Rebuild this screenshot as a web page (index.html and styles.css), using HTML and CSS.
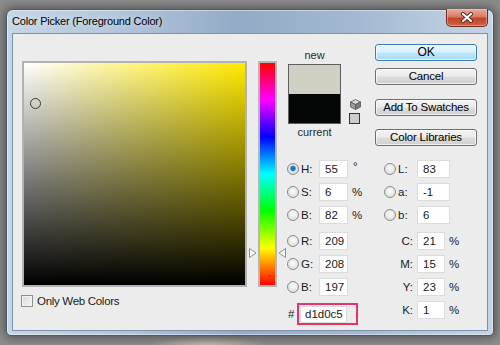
FILE: index.html
```html
<!DOCTYPE html>
<html lang="en">
<head>
    <meta charset="UTF-8">
    <title>Color Picker (Foreground Color)</title>
    <link rel="stylesheet" href="styles.css">
</head>
<body>
    <div class="desk">
        <div class="window">
            <div class="titlebar">
                <span class="title">Color Picker (Foreground Color)</span>
                <button class="close">
                    <svg width="14" height="11" viewBox="0 0 14 11">
                        <path d="M3 2 L11 9 M11 2 L3 9" stroke="#5a2a22" stroke-width="4" stroke-linecap="round"/>
                        <path d="M3 2 L11 9 M11 2 L3 9" stroke="#fff" stroke-width="2.2" stroke-linecap="round"/>
                    </svg>
                </button>
            </div>
            <div class="client">
                <!-- saturation / brightness field -->
                <div class="picker-col">
                    <div class="field">
                        <span class="ring"></span>
                    </div>
                    <label class="webcolors"><span class="check"></span>Only Web Colors</label>
                </div>

                <!-- hue slider -->
                <div class="hue">
                    <svg class="arrow arrow-l" width="8" height="10" viewBox="0 0 8 10">
                        <polygon points="0.5,0.5 7,5 0.5,9.5" fill="#fff" stroke="#8e8e8e"/>
                    </svg>
                    <svg class="arrow arrow-r" width="8" height="10" viewBox="0 0 8 10">
                        <polygon points="7.5,0.5 1,5 7.5,9.5" fill="#fff" stroke="#8e8e8e"/>
                    </svg>
                </div>

                <div class="side">
                    <div class="side-top">
                        <div class="preview">
                            <div class="cap">new</div>
                            <div class="swatch">
                                <div class="sw-new"></div>
                                <div class="sw-cur"></div>
                            </div>
                            <div class="cap">current</div>
                        </div>
                        <div class="alerts">
                            <svg class="cube" width="11" height="11" viewBox="0 0 11 11">
                                <polygon points="5.5,0.5 10.5,3 5.5,5.5 0.5,3" fill="#dcdcdc" stroke="#555" stroke-width="0.8"/>
                                <polygon points="0.5,3 5.5,5.5 5.5,10.5 0.5,8" fill="#9c9c9c" stroke="#555" stroke-width="0.8"/>
                                <polygon points="10.5,3 5.5,5.5 5.5,10.5 10.5,8" fill="#7c7c7c" stroke="#555" stroke-width="0.8"/>
                            </svg>
                            <span class="websafe"></span>
                        </div>
                        <div class="buttons">
                            <button class="btn btn-ok">OK</button>
                            <button class="btn btn-cancel">Cancel</button>
                            <button class="btn btn-add">Add To Swatches</button>
                            <button class="btn btn-lib">Color Libraries</button>
                        </div>
                    </div>

                    <div class="values">
                        <div class="col col-a">
                            <div class="row"><span class="radio on"></span><span class="lbl">H:</span><span class="num">55</span><span class="unit deg">°</span></div>
                            <div class="row"><span class="radio"></span><span class="lbl">S:</span><span class="num">6</span><span class="unit">%</span></div>
                            <div class="row"><span class="radio"></span><span class="lbl">B:</span><span class="num">82</span><span class="unit">%</span></div>
                            <div class="row sep"><span class="radio"></span><span class="lbl">R:</span><span class="num">209</span></div>
                            <div class="row"><span class="radio"></span><span class="lbl">G:</span><span class="num">208</span></div>
                            <div class="row"><span class="radio"></span><span class="lbl">B:</span><span class="num">197</span></div>
                            <div class="hexrow">
                                <span class="hash">#</span>
                                <span class="hexbox"><span class="num hex">d1d0c5</span></span>
                            </div>
                        </div>
                        <div class="col col-b">
                            <div class="row"><span class="radio"></span><span class="lbl">L:</span><span class="num">83</span></div>
                            <div class="row"><span class="radio"></span><span class="lbl">a:</span><span class="num">-1</span></div>
                            <div class="row"><span class="radio"></span><span class="lbl">b:</span><span class="num">6</span></div>
                            <div class="row sep cmyk"><span class="lbl">C:</span><span class="num">21</span><span class="unit">%</span></div>
                            <div class="row cmyk"><span class="lbl">M:</span><span class="num">15</span><span class="unit">%</span></div>
                            <div class="row cmyk"><span class="lbl">Y:</span><span class="num">23</span><span class="unit">%</span></div>
                            <div class="row cmyk"><span class="lbl">K:</span><span class="num">1</span><span class="unit">%</span></div>
                        </div>
                    </div>
                </div>
            </div>
        </div>
    </div>
</body>
</html>
```

FILE: styles.css
```css
body, html {
    margin: 0;
    padding: 0;
    width: 100%;
    height: 100%;
    overflow: hidden;
}

body {
    background-color: #8c8c8c;
    background-image: radial-gradient(ellipse 60px 12px at 208px 348px, rgba(214, 203, 182, 0.95), rgba(214, 203, 182, 0));
    font-family: "Liberation Sans", Arial, sans-serif;
    font-size: 11px;
    color: #1b1b1b;
}

.desk {
    padding: 9px 0 0 6px;
}

.window {
    width: 488px;
    height: 327px;
    box-sizing: border-box;
    display: flex;
    flex-direction: column;
    padding: 0 5px 4px;
    border: 1px solid #4a5a6c;
    border-radius: 7px 7px 5px 5px;
    background: linear-gradient(to right, #c6d6e7 0%, #b3c6db 22%, #93abc6 48%, #a3b9d1 72%, #c4d5e7 100%);
    box-shadow: 0 0 10px 2px rgba(0, 0, 0, 0.4), inset 0 0 0 1px rgba(255, 255, 255, 0.45);
}

/* title bar */
.titlebar {
    height: 23px;
    display: flex;
    align-items: flex-start;
}

.title {
    padding-top: 4px;
    line-height: 14px;
    font-size: 11px;
    letter-spacing: -0.2px;
    color: #000;
    text-shadow: 0 0 6px rgba(255, 255, 255, 0.7);
}

.close {
    margin-left: auto;
    margin-top: -1px;
    width: 42px;
    height: 18px;
    padding: 0;
    display: flex;
    align-items: center;
    justify-content: center;
    border: 1px solid #6e2b20;
    border-top: none;
    border-radius: 0 0 5px 5px;
    background: linear-gradient(#e8ab9c 0%, #d97b66 45%, #c5432b 55%, #cf6146 100%);
    box-shadow: inset 0 0 0 1px rgba(255, 210, 200, 0.45);
}

/* client area */
.client {
    flex: 1;
    display: flex;
    align-items: flex-start;
    border: 1px solid #7d92a8;
    background-color: #ececec;
}

.picker-col {
    margin: 27px 0 0 9px;
    width: 225px;
}

.field {
    position: relative;
    height: 226px;
    box-sizing: border-box;
    border: 2px solid #b2b2b2;
    background:
        linear-gradient(to top, #000, rgba(0, 0, 0, 0)),
        linear-gradient(to right, #fff, #ffea00);
}

.ring {
    position: absolute;
    left: 6px;
    top: 35px;
    width: 9px;
    height: 9px;
    border: 1.5px solid #3a3a3a;
    border-radius: 50%;
}

.webcolors {
    display: flex;
    align-items: center;
    margin: 8px 0 0 -1px;
    font-size: 11.5px;
    letter-spacing: -0.3px;
}

.check {
    width: 12px;
    height: 12px;
    box-sizing: border-box;
    margin-right: 4px;
    border: 1px solid #8e8f8f;
    background: linear-gradient(135deg, #d8d8d8, #f7f7f7);
    box-shadow: inset 0 0 0 1px #f4f4f4;
}

.hue {
    position: relative;
    margin: 27px 0 0 11px;
    width: 19px;
    height: 226px;
    box-sizing: border-box;
    border: 2px solid #b6b6b6;
    background: linear-gradient(#ff0000 0%, #ff00ff 16.6%, #0000ff 33.3%, #00ffff 50%, #00ff00 66.6%, #ffff00 83.3%, #ff0000 100%);
}

.arrow {
    position: absolute;
    top: 185px;
}

.arrow-l {
    left: -11px;
}

.arrow-r {
    left: 18px;
}

.side {
    margin-left: 10px;
    padding-top: 10px;
}

.side-top {
    display: flex;
    align-items: flex-start;
}

.preview {
    margin: 4px 0 0 1px;
    width: 53px;
}

.cap {
    line-height: 14px;
    text-align: center;
    color: #2a2a2a;
}

.swatch {
    margin: 2px 0 1px;
    border: 1px solid #5e5e5e;
}

.sw-new {
    height: 29px;
    background-color: #d1d0c5;
}

.sw-cur {
    height: 29px;
    background-color: #040606;
}

.alerts {
    margin: 55px 0 0 8px;
    width: 11px;
    display: flex;
    flex-direction: column;
    gap: 3px;
}

.cube {
    display: block;
    margin-left: 1px;
}

.websafe {
    width: 11px;
    height: 11px;
    box-sizing: border-box;
    border: 1px solid #333;
    background-color: #cccccc;
}

.buttons {
    margin-left: 15px;
    width: 102px;
    display: flex;
    flex-direction: column;
}

.btn {
    height: 17px;
    padding: 0;
    box-sizing: border-box;
    border: 1px solid #707070;
    border-radius: 3px;
    background: linear-gradient(#f4f4f4 0%, #ebebeb 48%, #dddddd 52%, #cfcfcf 100%);
    box-shadow: inset 0 0 0 1px rgba(255, 255, 255, 0.7);
    font-family: "Liberation Sans", Arial, sans-serif;
    font-size: 11.5px;
    letter-spacing: -0.2px;
    line-height: 15px;
    color: #000;
}

.btn-ok {
    border-color: #3c7fb1;
    background: linear-gradient(#ecf7fd 0%, #d9f0fc 48%, #bee6fd 52%, #a9dbf6 100%);
    font-size: 12px;
}

.btn-cancel {
    margin-top: 7px;
}

.btn-add {
    margin-top: 14px;
}

.btn-lib {
    margin-top: 13px;
}

/* value fields */
.values {
    margin-top: 14px;
    display: flex;
}

.col-a {
    width: 97px;
}

.row {
    display: flex;
    align-items: center;
    height: 18px;
}

.row + .row {
    margin-top: 5px;
}

.row.sep {
    margin-top: 8px;
}

.radio {
    width: 12px;
    height: 12px;
    box-sizing: border-box;
    margin-right: 2px;
    border: 1px solid #8b8b8b;
    border-radius: 50%;
    background: radial-gradient(circle at 50% 40%, #fdfdfd, #d4d4d4);
}

.radio.on {
    background: radial-gradient(circle at 50% 45%, #1c5c9c 0, #3b88cc 2.4px, #e8e8e8 3.4px, #d0d0d0 100%);
}

.lbl {
    width: 18px;
    font-size: 11.5px;
}

.num {
    width: 29px;
    height: 18px;
    box-sizing: border-box;
    padding-left: 5px;
    border: 1px solid #dcdcdc;
    background-color: #fff;
    line-height: 16px;
    font-size: 11.5px;
}

.unit {
    margin-left: 4px;
    font-size: 11.5px;
}

.unit.deg {
    margin-left: 5px;
    align-self: flex-start;
    line-height: 12px;
}

.col-b .lbl {
    width: 19px;
}

.col-b .num {
    width: 33px;
}

.col-b .cmyk .lbl {
    width: 33px;
    padding-right: 4px;
    box-sizing: border-box;
    text-align: right;
}

.col-b .cmyk .num {
    width: 28px;
}

.hexrow {
    margin-top: 7px;
    display: flex;
    align-items: center;
}

.hash {
    width: 10px;
    padding-left: 1px;
    box-sizing: border-box;
    font-size: 11.5px;
}

.hexbox {
    width: 61px;
    height: 22px;
    box-sizing: border-box;
    padding: 1px 0 0 1px;
    border: 2px solid #e6336c;
}

.num.hex {
    display: block;
    width: 47px;
    height: 17px;
    padding-left: 4px;
    line-height: 15px;
}
```
